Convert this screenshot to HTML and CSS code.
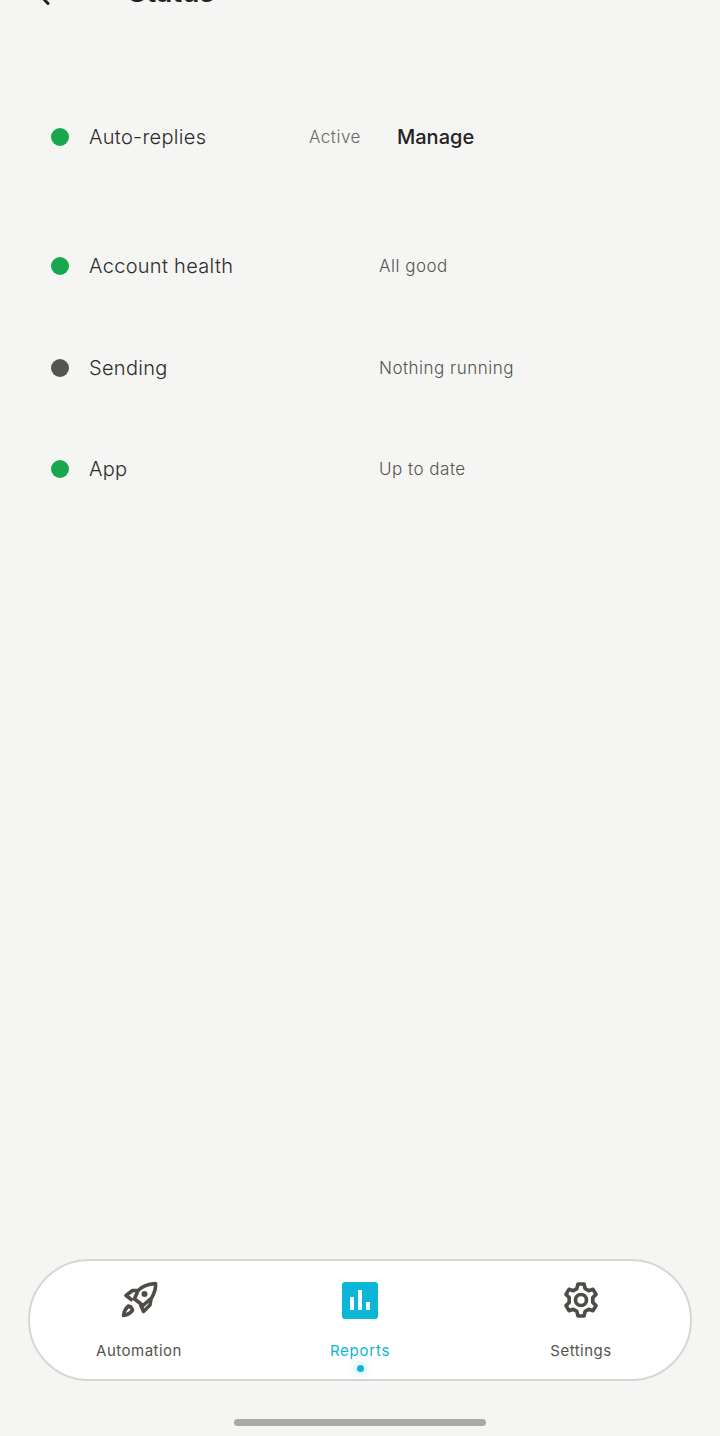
FILE: index.html
```html
<!DOCTYPE html>
<html lang="en">
<head>
    <meta charset="UTF-8">
    <meta name="viewport" content="width=device-width, initial-scale=1.0">
    <title>Status</title>
    <link rel="stylesheet" href="styles.css">
</head>
<body>
    <div class="screen">
        <div class="header">
            <svg class="back-icon" width="28" height="28" viewBox="0 0 28 28" fill="none" stroke="#222" stroke-width="3" stroke-linecap="round" stroke-linejoin="round">
                <path d="M18 25.5 L7 14 L18 2.5"/>
            </svg>
            <div class="header-title">Status</div>
        </div>

        <div class="row row-first">
            <span class="dot green"></span>
            <span class="row-label">Auto-replies</span>
            <span class="row-active">Active</span>
            <a href="#" class="row-link">Manage</a>
        </div>

        <div class="group">
            <div class="row">
                <span class="dot green"></span>
                <span class="row-label">Account health</span>
                <span class="row-value">All good</span>
            </div>
            <div class="row">
                <span class="dot grey"></span>
                <span class="row-label">Sending</span>
                <span class="row-value">Nothing running</span>
            </div>
            <div class="row">
                <span class="dot green"></span>
                <span class="row-label">App</span>
                <span class="row-value">Up to date</span>
            </div>
        </div>

        <div class="nav">
            <a href="#" class="nav-item">
                <svg class="nav-icon" width="40" height="40" viewBox="0 0 40 40" fill="none" stroke="#4f4c47" stroke-width="3.6" stroke-linejoin="round">
                    <path d="M36.5 3.5 C29 4 23 6.5 19 10.5 L15.5 19 L24 25.5 L32.5 18 C35.5 13 37 8.5 36.5 3.5 Z"/>
                    <path d="M18 10.5 L13.5 10.5 L7 15.5 L13.5 20.5"/>
                    <path d="M32 19 L31 25 L24.5 31.5 L21.5 24.5"/>
                    <path d="M9.5 26 C6.5 28.5 5 32 4.5 35.5 C8 35 11.5 33.5 13.5 30 C13 28 11.5 26.5 9.5 26 Z"/>
                    <circle cx="25.5" cy="14" r="3" fill="#4f4c47" stroke="none"/>
                </svg>
                <span class="nav-label">Automation</span>
            </a>
            <a href="#" class="nav-item active">
                <svg class="nav-icon" width="40" height="40" viewBox="0 0 40 40">
                    <rect x="2" y="2" width="36" height="37" rx="3" fill="#0cb6d6"/>
                    <rect x="10" y="17" width="4" height="13" fill="#fff"/>
                    <rect x="18" y="10" width="4" height="20" fill="#fff"/>
                    <rect x="26" y="22" width="4" height="8" fill="#fff"/>
                </svg>
                <span class="nav-label">Reports</span>
                <span class="nav-dot"></span>
            </a>
            <a href="#" class="nav-item">
                <svg class="nav-icon" width="40" height="40" viewBox="0 0 24 24" fill="none" stroke="#4f4c47" stroke-width="2.2" stroke-linejoin="round">
                    <circle cx="12" cy="12" r="3.3"/>
                    <path d="M10.2 2.4 H13.8 L14.5 5.2 L16.6 6.4 L19.2 5.6 L21 8.6 L19.1 10.5 V13.5 L21 15.4 L19.2 18.4 L16.6 17.6 L14.5 18.8 L13.8 21.6 H10.2 L9.5 18.8 L7.4 17.6 L4.8 18.4 L3 15.4 L4.9 13.5 V10.5 L3 8.6 L4.8 5.6 L7.4 6.4 L9.5 5.2 Z"/>
                </svg>
                <span class="nav-label">Settings</span>
            </a>
        </div>

        <div class="home-bar"></div>
    </div>
</body>
</html>
```

FILE: styles.css
```css
html, body {
    margin: 0;
    height: 100%;
}
body {
    background-color: #f5f5f3;
    font-family: Inter, "Noto Sans", sans-serif;
    overflow: hidden;
}
.screen {
    height: 1436px;
    display: flex;
    flex-direction: column;
    overflow: hidden;
}
/* header is scrolled almost out of view */
.header {
    height: 40px;
    margin-top: -28px;
    padding-left: 30px;
    display: flex;
    align-items: center;
    flex-shrink: 0;
}
.back-icon {
    flex-shrink: 0;
}
.header-title {
    margin-left: 70px;
    font-size: 28px;
    font-weight: 600;
    color: #222;
}
.row {
    height: 40px;
    padding-left: 51px;
    display: flex;
    align-items: center;
    color: #333;
    flex-shrink: 0;
}
.row-first {
    margin-top: 105px;
}
.group {
    margin-top: 89px;
    display: flex;
    flex-direction: column;
    gap: 61.5px;
}
.dot {
    width: 18px;
    height: 18px;
    border-radius: 50%;
    flex-shrink: 0;
}
.green {
    background-color: #17a84f;
}
.grey {
    background-color: #57534e;
}
.row-label {
    margin-left: 20px;
    width: 290px;
    font-size: 20px;
    font-weight: 300;
    letter-spacing: 0.3px;
    color: #2c2c2c;
    flex-shrink: 0;
}
.row-value {
    font-size: 17px;
    font-weight: 300;
    letter-spacing: 0.5px;
    color: #55534f;
}
.row-active {
    margin-left: -70px;
    width: 88px;
    font-size: 17px;
    font-weight: 300;
    letter-spacing: 0.5px;
    color: #6a6864;
}
.row-link {
    font-size: 20px;
    font-weight: 500;
    color: #222;
    text-decoration: none;
}
.nav {
    margin: auto 28px 0;
    height: 118px;
    display: flex;
    justify-content: center;
    background-color: #fff;
    border: 2px solid #d6d6d3;
    border-radius: 61px;
    flex-shrink: 0;
}
.nav-item {
    width: 221px;
    flex-shrink: 0;
    position: relative;
    padding-top: 19px;
    display: flex;
    flex-direction: column;
    align-items: center;
    text-decoration: none;
    color: #55534f;
}
.nav-item.active {
    color: #0cb6d6;
    letter-spacing: 0.25px;
}
.nav-icon {
    display: block;
}
.nav-label {
    margin-top: 21px;
    font-size: 15px;
    line-height: 20px;
    letter-spacing: 0.5px;
}
.active .nav-label {
    letter-spacing: 0.75px;
}
.nav-dot {
    position: absolute;
    left: 50%;
    bottom: 7px;
    width: 7px;
    height: 7px;
    margin-left: -3.5px;
    border-radius: 50%;
    background-color: #0cb6d6;
    box-shadow: 0 0 8px 3px rgba(12, 182, 214, 0.2);
}
.home-bar {
    margin: 38px auto 10px;
    width: 252px;
    height: 7px;
    border-radius: 4px;
    background-color: #a9a9a7;
    flex-shrink: 0;
}
```
